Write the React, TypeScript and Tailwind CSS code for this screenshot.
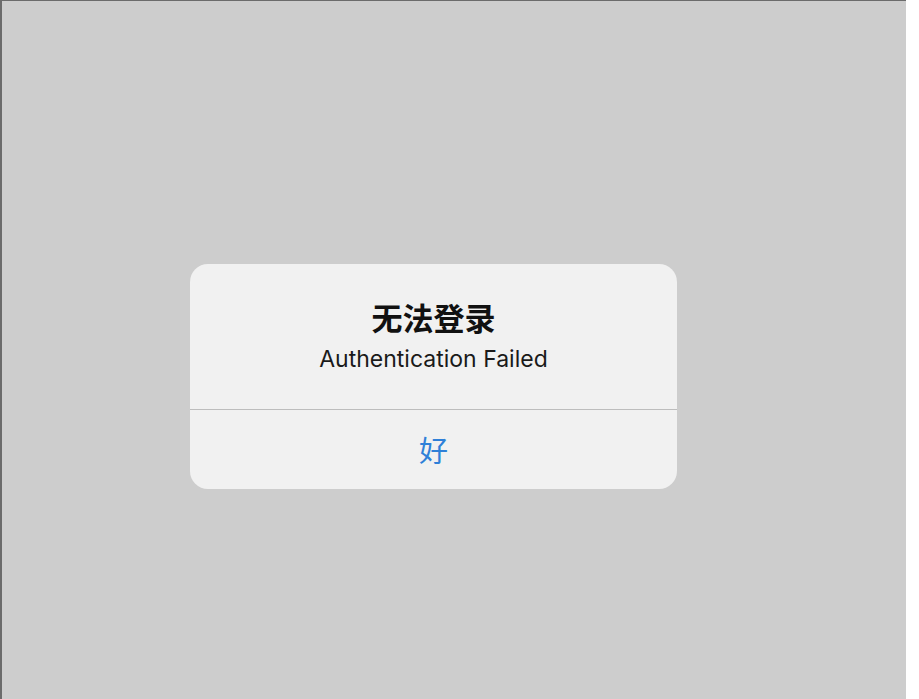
import React from "react";

const cjk = { fontFamily: '"Noto Sans CJK SC", "Noto Sans", sans-serif' };

function AlertDialog() {
  return (
    <div className="w-[487px] h-[225px] rounded-[18px] bg-[#f1f1f1] flex flex-col overflow-hidden">
      <div className="h-[145px] flex flex-col items-center pt-[33px]">
        <div className="text-[31px] leading-[40px] font-bold text-[#111]" style={cjk}>
          无法登录
        </div>
        <div
          className="mt-[4px] text-[23px] leading-[36px] text-[#1a1a1a]"
          style={{ fontFamily: 'Inter, "Noto Sans", sans-serif' }}
        >
          Authentication Failed
        </div>
      </div>
      <div className="h-px bg-[#bdbdbd]" />
      <button className="flex-1 flex items-center justify-center text-[29px] text-[#2f80d8]" style={cjk}>
        好
      </button>
    </div>
  );
}

export default function App() {
  return (
    <div className="flex w-[919px] h-[699px] bg-white">
      <div className="w-[906px] h-[699px] bg-[#cdcdcd] border-t border-l-2 border-[#6b6b6b] pt-[263px] pl-[188px]">
        <AlertDialog />
      </div>
    </div>
  );
}
